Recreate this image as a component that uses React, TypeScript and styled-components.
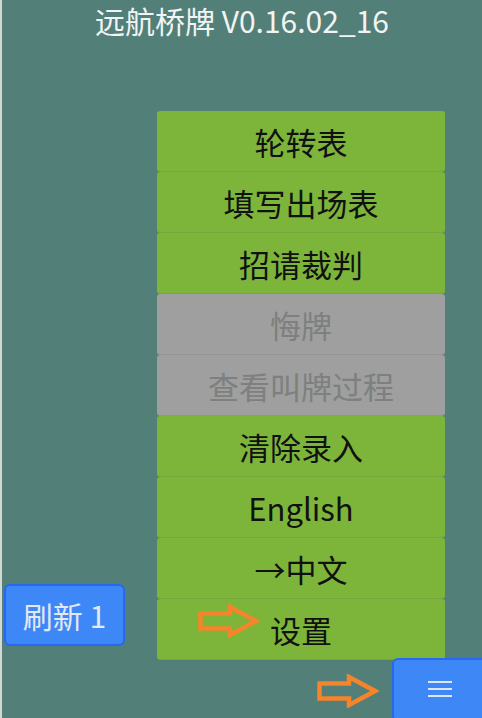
import React from 'react';
import styled, { createGlobalStyle } from 'styled-components';

const GlobalStyle = createGlobalStyle`
  html, body {
    margin: 0;
    padding: 0;
  }
  body {
    font-family: "Noto Sans CJK SC", "Noto Sans", sans-serif;
  }
`;

const menuItems = [
  { label: '轮转表', disabled: false, hint: false },
  { label: '填写出场表', disabled: false, hint: false },
  { label: '招请裁判', disabled: false, hint: false },
  { label: '悔牌', disabled: true, hint: false },
  { label: '查看叫牌过程', disabled: true, hint: false },
  { label: '清除录入', disabled: false, hint: false },
  { label: 'English', disabled: false, hint: false },
  { label: '→中文', disabled: false, hint: false },
  { label: '设置', disabled: false, hint: true },
];

const Arrow = () => (
  <svg width="62" height="34" viewBox="0 0 62 34" fill="none">
    <path
      d="M2.5 9.5 H32 V3 L58 17 L32 31 V24.5 H2.5 Z"
      stroke="#f5842a"
      strokeWidth="4.5"
    />
  </svg>
);

const App = () => {
  return (
    <Page>
      <GlobalStyle />
      <Title>远航桥牌 V0.16.02_16</Title>
      <Menu>
        {menuItems.map((item) => (
          <MenuButton key={item.label} $disabled={item.disabled}>
            {item.hint && (
              <ItemHint>
                <Arrow />
              </ItemHint>
            )}
            {item.label}
          </MenuButton>
        ))}
      </Menu>
      <RefreshButton>刷新 1</RefreshButton>
      <MenuToggle>
        <ToggleHint>
          <Arrow />
        </ToggleHint>
        <svg width="24" height="18" viewBox="0 0 24 18">
          <g stroke="#dde6f2" strokeWidth="2">
            <line x1="0" y1="2" x2="24" y2="2" />
            <line x1="0" y1="9" x2="24" y2="9" />
            <line x1="0" y1="16" x2="24" y2="16" />
          </g>
        </svg>
      </MenuToggle>
    </Page>
  );
};

const Page = styled.div`
  position: relative;
  height: 718px;
  overflow: hidden;
  background: #537f79;
  border-left: 2px solid #d6d6d2;
  box-sizing: border-box;
`;

const Title = styled.h1`
  margin: 0;
  padding-top: 1px;
  text-align: center;
  font-size: 30px;
  font-weight: 400;
  line-height: 38px;
  color: #f2f4f3;
`;

const Menu = styled.div`
  position: absolute;
  left: 155px;
  top: 111px;
  width: 288px;
  display: flex;
  flex-direction: column;
  gap: 1px;
`;

const MenuButton = styled.div<{ $disabled: boolean }>`
  position: relative;
  height: 60px;
  display: flex;
  align-items: center;
  justify-content: center;
  border-radius: 3px;
  background: ${(p) => (p.$disabled ? '#9e9f9e' : '#7db53b')};
  box-shadow: 0 1px 0 ${(p) => (p.$disabled ? '#939493' : '#74a83a')};
  color: ${(p) => (p.$disabled ? '#7d807e' : '#111')};
  font-size: 31px;
  line-height: 1;
`;

const ItemHint = styled.div`
  position: absolute;
  left: 41px;
  top: 5px;
  line-height: 0;
`;

const RefreshButton = styled.div`
  position: absolute;
  left: 2px;
  top: 584px;
  width: 121px;
  height: 62px;
  box-sizing: border-box;
  display: flex;
  align-items: center;
  justify-content: center;
  background: #3d87f7;
  border: 2px solid #2569f3;
  border-radius: 6px;
  color: #e3e9f1;
  font-size: 30px;
`;

const MenuToggle = styled.div`
  position: absolute;
  left: 390px;
  top: 658px;
  width: 96px;
  height: 64px;
  box-sizing: border-box;
  display: flex;
  align-items: flex-start;
  justify-content: flex-start;
  padding: 20px 0 0 34px;
  background: #3d87f7;
  border: 2px solid #2569f3;
  border-radius: 6px;
`;

const ToggleHint = styled.div`
  position: absolute;
  left: -77px;
  top: 14px;
  line-height: 0;
`;

export default App;
